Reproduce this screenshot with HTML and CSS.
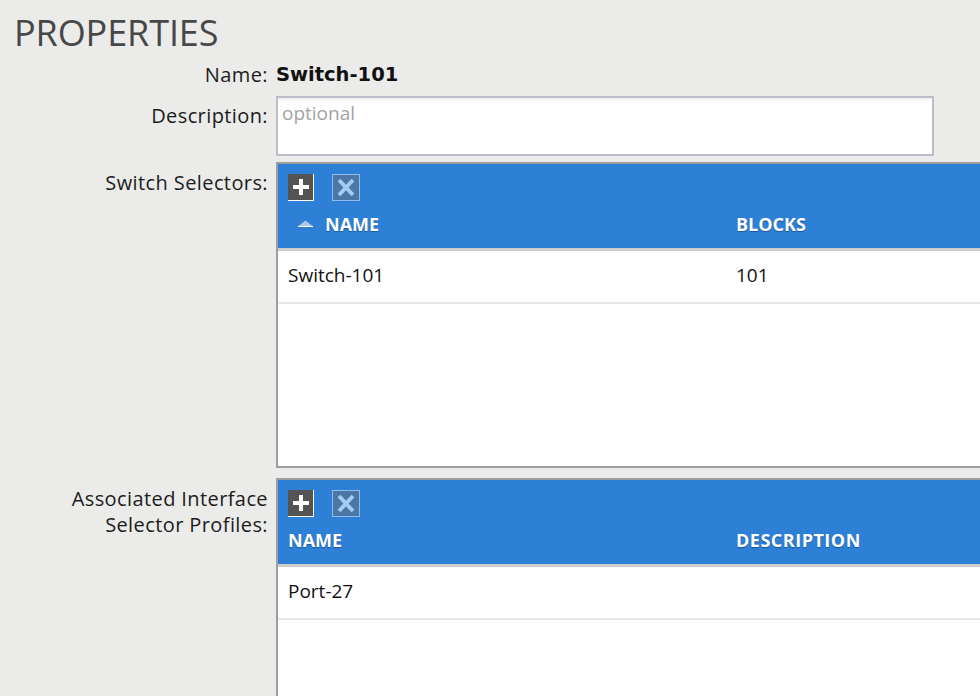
FILE: index.html
```html
<!DOCTYPE html>
<html>
<head>
<meta charset="utf-8">
<link rel="stylesheet" href="styles.css">
</head>
<body>
<div class="page">
  <h1 class="title">PROPERTIES</h1>
  <div class="form">
    <div class="label label-name">Name:</div>
    <div class="value-name">Switch-101</div>

    <div class="label label-desc">Description:</div>
    <div class="field-desc"><textarea class="desc" placeholder="optional"></textarea></div>

    <div class="label label-t1">Switch Selectors:</div>
    <div class="gtable t1">
      <div class="head">
        <div class="toolbar">
          <span class="ico ico-add"><svg width="26" height="27" viewBox="0 0 26 27"><rect x="0" y="0" width="26" height="27" fill="#ffffff"/><rect x="0" y="0" width="25" height="26" fill="#545454"/><rect x="11" y="5" width="4" height="16" fill="#ffffff"/><rect x="5" y="11" width="16" height="4" fill="#ffffff"/></svg></span>
          <span class="ico ico-del"><svg width="28" height="27" viewBox="0 0 28 27"><rect x="0.5" y="0.5" width="27" height="26" fill="#4a77a6" stroke="#8fbdf0" stroke-width="1"/><path d="M7 6 L21 21 M21 6 L7 21" stroke="#a3cbf3" stroke-width="4"/></svg></span>
        </div>
        <div class="thead">
          <div class="th c1"><svg class="sort" width="15" height="7" viewBox="0 0 15 7"><polygon points="7.5,0.5 14.5,6 0.5,6" fill="#a9c9ef"/><rect x="0" y="6" width="15" height="1" fill="#ffffff"/></svg>NAME</div>
          <div class="th c2">BLOCKS</div>
        </div>
      </div>
      <div class="tr">
        <div class="td c1">Switch-101</div>
        <div class="td c2">101</div>
      </div>
    </div>

    <div class="label label-t2">Associated Interface<br>Selector Profiles:</div>
    <div class="gtable t2">
      <div class="head">
        <div class="toolbar">
          <span class="ico ico-add"><svg width="26" height="27" viewBox="0 0 26 27"><rect x="0" y="0" width="26" height="27" fill="#ffffff"/><rect x="0" y="0" width="25" height="26" fill="#545454"/><rect x="11" y="5" width="4" height="16" fill="#ffffff"/><rect x="5" y="11" width="16" height="4" fill="#ffffff"/></svg></span>
          <span class="ico ico-del"><svg width="28" height="27" viewBox="0 0 28 27"><rect x="0.5" y="0.5" width="27" height="26" fill="#4a77a6" stroke="#8fbdf0" stroke-width="1"/><path d="M7 6 L21 21 M21 6 L7 21" stroke="#a3cbf3" stroke-width="4"/></svg></span>
        </div>
        <div class="thead">
          <div class="th c1">NAME</div>
          <div class="th c2 wide">DESCRIPTION</div>
        </div>
      </div>
      <div class="tr">
        <div class="td c1">Port-27</div>
        <div class="td c2"></div>
      </div>
    </div>
  </div>
</div>
</body>
</html>
```
FILE: styles.css
```css
html, body {
  margin: 0;
  padding: 0;
}
body {
  width: 980px;
  height: 696px;
  overflow: hidden;
  background: #ebebe9;
  font-family: "Open Sans", "DejaVu Sans", sans-serif;
  color: #1c1c1c;
}
.page {
  padding-top: 13px;
}
.title {
  margin: 0;
  padding-left: 14px;
  font-size: 36px;
  font-weight: 400;
  line-height: 40px;
  color: #474747;
  letter-spacing: -0.1px;
}
.form {
  display: grid;
  grid-template-columns: 268px 1fr;
  column-gap: 8px;
}
.label {
  text-align: right;
  font-size: 20px;
  line-height: 26px;
  letter-spacing: 0.4px;
  color: #1c1c1c;
}
.label-name {
  margin-top: 9px;
}
.value-name {
  margin-top: 9px;
  font-family: "DejaVu Sans", "Open Sans", sans-serif;
  font-size: 19.5px;
  line-height: 26px;
  font-weight: 700;
  color: #111;
}
.label-desc {
  margin-top: 8px;
  padding-top: 7px;
}
.field-desc {
  margin-top: 8px;
}
.label-t1 {
  padding-top: 14px;
}
.label-t2 {
  padding-top: 18px;
}
.desc {
  display: block;
  box-sizing: border-box;
  width: 658px;
  height: 60px;
  margin: 0;
  padding: 3px 4px 0;
  border: 2px solid #babdcc;
  background: #fff;
  box-shadow: inset 0 3px 3px -1px rgba(0,0,0,0.07);
  font-family: "Open Sans", "DejaVu Sans", sans-serif;
  font-size: 19px;
  line-height: 24px;
  resize: none;
  outline: none;
}
.desc::placeholder {
  color: #a3a3a3;
}
.gtable {
  box-sizing: border-box;
  width: 760px;
  background: #fff;
  border: 2px solid #9e9e9e;
  border-right: none;
}
.t1 {
  margin-top: 6px;
  height: 306px;
}
.t2 {
  margin-top: 10px;
  height: 320px;
}
.head {
  background: #2e80d6;
  border-bottom: 3px solid #cdcdcd;
}
.toolbar {
  display: flex;
  align-items: flex-start;
  gap: 18px;
  height: 27px;
  padding: 10px 0 0 10px;
}
.ico {
  display: block;
  height: 27px;
}
.ico svg {
  display: block;
}
.thead {
  display: flex;
  height: 47px;
}
.th {
  box-sizing: border-box;
  padding-left: 10px;
  font-size: 18px;
  font-weight: 700;
  line-height: 47px;
  color: #fff;
  text-shadow: 0 1px 1px rgba(0, 30, 80, 0.45);
  display: flex;
  align-items: center;
}
.th.wide {
  letter-spacing: 0.5px;
}
.c1 {
  width: 448px;
  flex: none;
}
.c2 {
  flex: 1;
}
.sort {
  display: block;
  margin-left: 10px;
  margin-right: 12px;
  margin-top: -2px;
}
.tr {
  display: flex;
  height: 51px;
  border-bottom: 2px solid #e8e8e8;
}
.td {
  box-sizing: border-box;
  padding-left: 10px;
  font-size: 19px;
  line-height: 49px;
  color: #111;
}
```
